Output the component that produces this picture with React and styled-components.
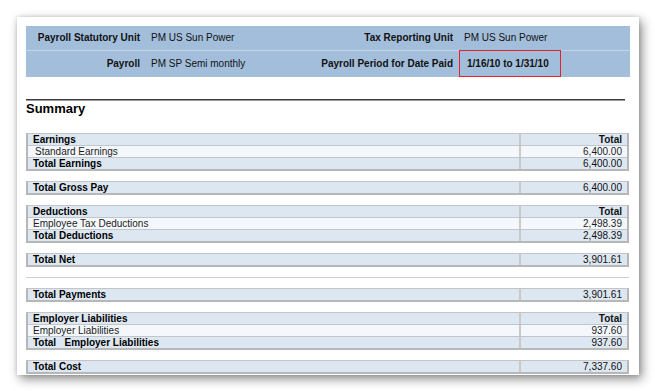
import styled, { createGlobalStyle } from "styled-components";

const GlobalStyle = createGlobalStyle`
  html, body {
    margin: 0;
    padding: 0;
    background: #ffffff;
  }
  body {
    font-family: "Liberation Sans", Arial, sans-serif;
    color: #000;
  }
`;

const sections = [
  {
    rows: [
      { label: "Earnings", value: "Total", kind: "head" },
      { label: "Standard Earnings", value: "6,400.00", kind: "data", indent: true },
      { label: "Total Earnings", value: "6,400.00", kind: "total" },
    ],
  },
  { rows: [{ label: "Total Gross Pay", value: "6,400.00", kind: "total" }] },
  {
    rows: [
      { label: "Deductions", value: "Total", kind: "head" },
      { label: "Employee Tax Deductions", value: "2,498.39", kind: "data" },
      { label: "Total Deductions", value: "2,498.39", kind: "total" },
    ],
  },
  { rows: [{ label: "Total Net", value: "3,901.61", kind: "total" }], ruleAfter: true },
  { rows: [{ label: "Total Payments", value: "3,901.61", kind: "total" }] },
  {
    rows: [
      { label: "Employer Liabilities", value: "Total", kind: "head" },
      { label: "Employer Liabilities", value: "937.60", kind: "data" },
      { label: "Total\u00a0\u00a0 Employer Liabilities", value: "937.60", kind: "total" },
    ],
  },
  { rows: [{ label: "Total Cost", value: "7,337.60", kind: "total" }] },
];

function App() {
  return (
    <>
      <GlobalStyle />
      <Page>
        <Card>
          <InfoBand>
            <InfoRow>
              <Label>Payroll Statutory Unit</Label>
              <Value>PM US Sun Power</Value>
              <Label>Tax Reporting Unit</Label>
              <Value>PM US Sun Power</Value>
              <span />
            </InfoRow>
            <InfoRow $last>
              <Label>Payroll</Label>
              <Value>PM SP Semi monthly</Value>
              <Label>Payroll Period for Date Paid</Label>
              <Value $highlight>1/16/10 to 1/31/10</Value>
              <span />
            </InfoRow>
          </InfoBand>

          <Rule />
          <Title>Summary</Title>

          <Sections>
            {sections.map((section, i) => (
              <Block key={i}>
                <ReportTable>
                  {section.rows.map((row, j) => (
                    <Row key={j} $kind={row.kind}>
                      <NameCell $kind={row.kind} $indent={row.indent}>
                        {row.label}
                      </NameCell>
                      <AmountCell $kind={row.kind}>{row.value}</AmountCell>
                    </Row>
                  ))}
                </ReportTable>
                {section.ruleAfter && <LightRule />}
              </Block>
            ))}
          </Sections>
        </Card>
      </Page>
    </>
  );
}

export default App;

const Page = styled.div`
  padding: 17px 16px 16px 17px;
`;

const Card = styled.div`
  width: 622px;
  height: 358px;
  box-sizing: border-box;
  padding: 9px 9px 0 9px;
  background: #fff;
  overflow: hidden;
  box-shadow: 3px 4px 10px rgba(0, 0, 0, 0.45), 0 0 4px rgba(0, 0, 0, 0.15);
`;

const InfoBand = styled.div`
  background: #a3bedb;
  width: 604px;
`;

const InfoRow = styled.div`
  display: grid;
  grid-template-columns: 120px 164px 149px 102px 1fr;
  height: ${(props) => (props.$last ? "26px" : "24px")};
  border-bottom: ${(props) => (props.$last ? "none" : "1px solid #c3d5e8")};
  font-size: 10px;
  line-height: 1;
`;

const Label = styled.div`
  display: flex;
  align-items: center;
  justify-content: flex-end;
  padding-right: 6px;
  font-weight: bold;
  color: #111;
`;

const Value = styled.div`
  display: flex;
  align-items: center;
  padding-left: ${(props) => (props.$highlight ? "7px" : "5px")};
  font-weight: ${(props) => (props.$highlight ? "bold" : "normal")};
  color: #111;
  border: ${(props) => (props.$highlight ? "1px solid #e8202e" : "none")};
  margin-top: ${(props) => (props.$highlight ? "-1px" : "0")};
`;

const Rule = styled.div`
  margin: 22px 5px 0 0;
  height: 1px;
  background: #3c3c3c;
  box-shadow: 0 1px 0 #9a9a9a;
`;

const Title = styled.h2`
  margin: 1px 0 0;
  font-size: 13px;
  line-height: 16px;
  font-weight: bold;
`;

const Sections = styled.div`
  display: flex;
  flex-direction: column;
  gap: 10px;
  margin-top: 16px;
  width: 603px;
`;

const Block = styled.div`
  display: flex;
  flex-direction: column;
  gap: 10px;
`;

const ReportTable = styled.div`
  border: 2px solid #b7b7b7;
  border-top: 1px solid #c4c4c4;
  display: flex;
  flex-direction: column;
`;

const Row = styled.div`
  display: grid;
  grid-template-columns: 1fr 108px;
  background: ${(props) => (props.$kind === "data" ? "#f4f8fc" : "#dde7f2")};
  & + & {
    border-top: 1px solid #c2c6cc;
  }
`;

const NameCell = styled.div`
  font-size: 10px;
  line-height: 11px;
  padding-left: ${(props) => (props.$indent ? "7px" : "5px")};
  font-weight: ${(props) => (props.$kind === "data" ? "normal" : "bold")};
  color: ${(props) => (props.$kind === "data" ? "#1c1c1c" : "#000")};
  white-space: pre;
`;

const AmountCell = styled.div`
  font-size: 10px;
  line-height: 11px;
  text-align: right;
  padding-right: 5px;
  border-left: 2px solid #c9c9c9;
  font-weight: ${(props) => (props.$kind === "head" ? "bold" : "normal")};
  color: ${(props) => (props.$kind === "data" ? "#1c1c1c" : "#111")};
`;

const LightRule = styled.div`
  height: 1px;
  background: #cfcfcf;
`;
